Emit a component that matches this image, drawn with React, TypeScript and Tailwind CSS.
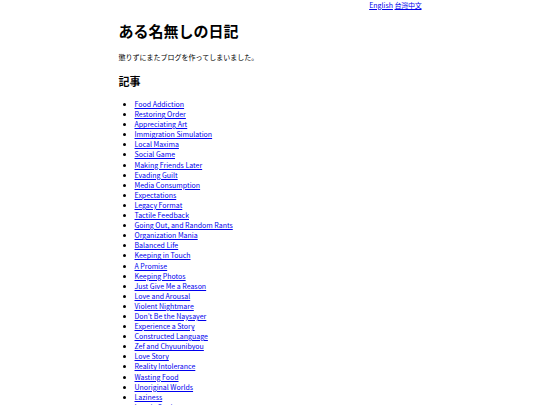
import React from 'react';

const posts = [
  'Food Addiction',
  'Restoring Order',
  'Appreciating Art',
  'Immigration Simulation',
  'Local Maxima',
  'Social Game',
  'Making Friends Later',
  'Evading Guilt',
  'Media Consumption',
  'Expectations',
  'Legacy Format',
  'Tactile Feedback',
  'Going Out, and Random Rants',
  'Organization Mania',
  'Balanced Life',
  'Keeping in Touch',
  'A Promise',
  'Keeping Photos',
  'Just Give Me a Reason',
  'Love and Arousal',
  'Violent Nightmare',
  'Don\u2019t Be the Naysayer',
  'Experience a Story',
  'Constructed Language',
  'Zef and Chyuunibyou',
  'Love Story',
  'Reality Intolerance',
  'Wasting Food',
  'Unoriginal Worlds',
  'Laziness',
  'Lonely Soul',
];

export default function App() {
  return (
    <div className="bg-white min-h-screen text-black font-['Noto_Sans_CJK_JP',sans-serif] text-[7px]">
      <div className="mx-auto w-[303px]">
        <nav className="text-right">
          <a href="#" className="text-[#0000ee] underline">English</a>{' '}
          <a href="#" lang="zh-TW" className="text-[#0000ee] underline font-['Noto_Sans_CJK_TC',sans-serif] tracking-[-0.25px]">台灣中文</a>
        </nav>
        <h1 className="text-[15px] font-bold mt-[9px] mb-[10px]">ある名無しの日記</h1>
        <p className="mb-[10px]">懲りずにまたブログを作ってしまいました。</p>
        <h2 className="text-[11px] font-bold mb-[9px]">記事</h2>
        <ul className="list-disc pl-4 leading-[10.1px] pt-[1px]">
          {posts.map((title) => (
            <li key={title}>
              <a href="#" className="text-[#0000ee] underline">{title}</a>
            </li>
          ))}
        </ul>
      </div>
    </div>
  );
}
